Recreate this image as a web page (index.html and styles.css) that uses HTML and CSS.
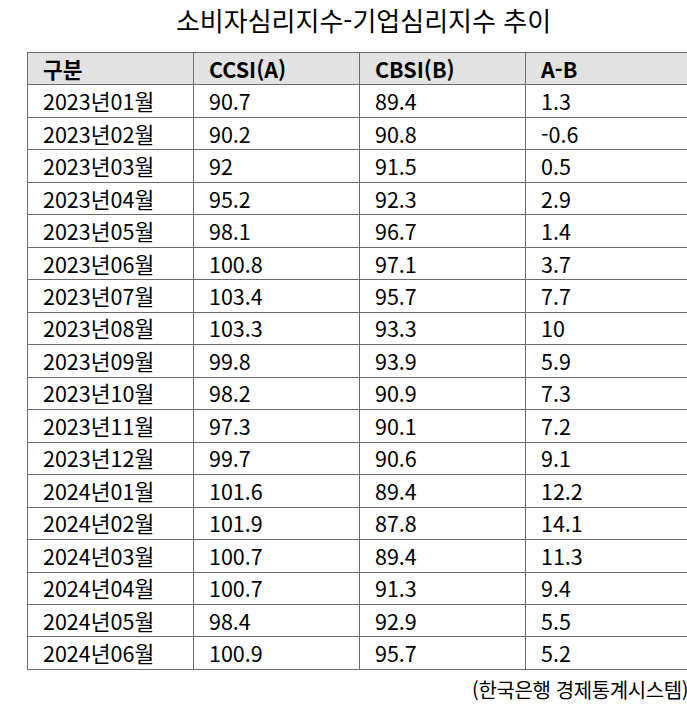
FILE: index.html
```html
<!DOCTYPE html>
<html lang="ko">
<head>
<meta charset="utf-8">
<title>소비자심리지수-기업심리지수 추이</title>
<link rel="stylesheet" href="styles.css">
</head>
<body>
<div class="page">
  <h1 class="title">소비자심리지수-기업심리지수 추이</h1>
  <table class="data">
    <thead>
      <tr><th>구분</th><th>CCSI(A)</th><th>CBSI(B)</th><th>A-B</th></tr>
    </thead>
    <tbody>
      <tr><td>2023년01월</td><td>90.7</td><td>89.4</td><td>1.3</td></tr>
      <tr><td>2023년02월</td><td>90.2</td><td>90.8</td><td>-0.6</td></tr>
      <tr><td>2023년03월</td><td>92</td><td>91.5</td><td>0.5</td></tr>
      <tr><td>2023년04월</td><td>95.2</td><td>92.3</td><td>2.9</td></tr>
      <tr><td>2023년05월</td><td>98.1</td><td>96.7</td><td>1.4</td></tr>
      <tr><td>2023년06월</td><td>100.8</td><td>97.1</td><td>3.7</td></tr>
      <tr><td>2023년07월</td><td>103.4</td><td>95.7</td><td>7.7</td></tr>
      <tr><td>2023년08월</td><td>103.3</td><td>93.3</td><td>10</td></tr>
      <tr><td>2023년09월</td><td>99.8</td><td>93.9</td><td>5.9</td></tr>
      <tr><td>2023년10월</td><td>98.2</td><td>90.9</td><td>7.3</td></tr>
      <tr><td>2023년11월</td><td>97.3</td><td>90.1</td><td>7.2</td></tr>
      <tr><td>2023년12월</td><td>99.7</td><td>90.6</td><td>9.1</td></tr>
      <tr><td>2024년01월</td><td>101.6</td><td>89.4</td><td>12.2</td></tr>
      <tr><td>2024년02월</td><td>101.9</td><td>87.8</td><td>14.1</td></tr>
      <tr><td>2024년03월</td><td>100.7</td><td>89.4</td><td>11.3</td></tr>
      <tr><td>2024년04월</td><td>100.7</td><td>91.3</td><td>9.4</td></tr>
      <tr><td>2024년05월</td><td>98.4</td><td>92.9</td><td>5.5</td></tr>
      <tr><td>2024년06월</td><td>100.9</td><td>95.7</td><td>5.2</td></tr>
    </tbody>
  </table>
  <p class="source">(한국은행 경제통계시스템)</p>
</div>
</body>
</html>
```
FILE: styles.css
```css
html, body {
  margin: 0;
  padding: 0;
  background: #fff;
  overflow: hidden;
}
body {
  font-family: "Noto Sans CJK KR", "Noto Sans", sans-serif;
  color: #000;
}
.page {
  width: 665px;
  padding: 0 27px;
}
.title {
  margin: 0;
  height: 52px;
  padding: 3px 0 0 8px;
  box-sizing: border-box;
  font-size: 26px;
  font-weight: normal;
  line-height: 34px;
  text-align: center;
  letter-spacing: 0;
}
.data {
  width: 665px;
  border-collapse: collapse;
  table-layout: fixed;
  font-size: 21.5px;
}
.data th, .data td {
  border: 1.5px solid #6b6b6b;
  text-align: left;
  padding: 0 0 0 15px;
  height: 32.47px;
  line-height: 30px;
  box-sizing: border-box;
  white-space: nowrap;
}
.data th {
  background: #e2e2e2;
  font-weight: bold;
}
.source {
  margin: 6px 0 0;
  padding-right: 4px;
  text-align: right;
  font-size: 20px;
  line-height: 28px;
  letter-spacing: -0.4px;
}
```
